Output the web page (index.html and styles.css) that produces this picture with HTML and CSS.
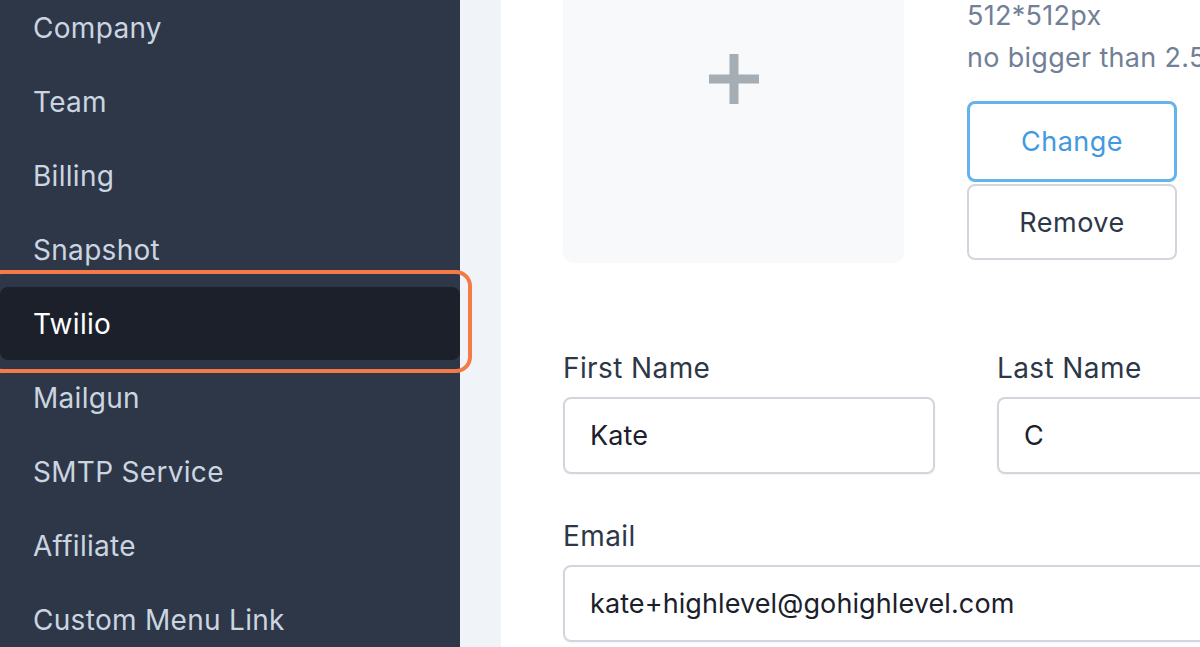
FILE: index.html
```html
<!DOCTYPE html>
<html>
<head>
<meta charset="utf-8">
<link rel="stylesheet" href="styles.css">
</head>
<body>
<div class="app">
  <nav class="sidebar">
    <ul class="menu">
      <li class="item">Company</li>
      <li class="item">Team</li>
      <li class="item">Billing</li>
      <li class="item">Snapshot</li>
      <li class="item active"><span class="highlight"></span>Twilio</li>
      <li class="item">Mailgun</li>
      <li class="item">SMTP Service</li>
      <li class="item">Affiliate</li>
      <li class="item">Custom Menu Link</li>
    </ul>
  </nav>
  <div class="gutter"></div>
  <main class="main">
    <section class="logo-row">
      <div class="logo-drop">
        <svg class="plus" width="50" height="50" viewBox="0 0 50 50"><path d="M25 0V50M0 25H50" stroke="#a6aeb5" stroke-width="9"/></svg>
      </div>
      <div class="logo-side">
        <p class="hint">512*512px</p>
        <p class="hint">no bigger than 2.5 MB</p>
        <div class="buttons">
          <button class="btn btn-change">Change</button>
          <button class="btn btn-remove">Remove</button>
        </div>
      </div>
    </section>
    <section class="form">
      <div class="row">
        <div class="field first">
          <label class="label">First Name</label>
          <div class="input">Kate</div>
        </div>
        <div class="field last">
          <label class="label">Last Name</label>
          <div class="input">C</div>
        </div>
      </div>
      <div class="field email">
        <label class="label">Email</label>
        <div class="input">kate+highlevel@gohighlevel.com</div>
      </div>
    </section>
  </main>
</div>
</body>
</html>
```
FILE: styles.css
```css
* { box-sizing: border-box; }
html, body { margin: 0; padding: 0; }
body {
  width: 1200px;
  height: 647px;
  overflow: hidden;
  font-family: Inter, "Noto Sans", "Liberation Sans", sans-serif;
  background: #ffffff;
}
.app {
  display: flex;
  height: 647px;
}
.sidebar {
  width: 460px;
  flex: none;
  background: #2d3748;
  position: relative;
  z-index: 1;
}
.menu {
  list-style: none;
  margin: -9px 0 0;
  padding: 0;
}
.item {
  position: relative;
  height: 74px;
  display: flex;
  align-items: center;
  padding-left: 33px;
  font-size: 28px;
  color: #cbd5e0;
  letter-spacing: 0.3px;
}
.item.active {
  background: #1c202b;
  color: #ffffff;
  border-radius: 8px;
  height: 73px;
  margin-bottom: 1px;
}
.highlight {
  position: absolute;
  left: -14px;
  right: -12px;
  top: -17px;
  bottom: -13px;
  border: 4px solid #f47a46;
  border-radius: 16px;
  pointer-events: none;
}
.gutter {
  width: 41px;
  flex: none;
  background: #f0f4f8;
}
.main {
  flex: 1;
  padding-left: 62px;
  min-width: 0;
  overflow: hidden;
}
.logo-row {
  display: flex;
  gap: 63px;
  align-items: flex-start;
}
.logo-drop {
  width: 341px;
  height: 290px;
  margin-top: -27px;
  flex: none;
  background: #f7f9fa;
  border-radius: 10px;
  display: flex;
  justify-content: center;
  padding-top: 81px;
}
.plus { display: block; }
.logo-side {
  white-space: nowrap;
}
.hint {
  margin: 0;
  font-size: 27px;
  line-height: 42px;
  color: #718096;
  letter-spacing: 0.3px;
}
.hint:first-child { margin-top: -5px; }
.buttons {
  display: flex;
  flex-direction: column;
  gap: 2px;
  margin-top: 22px;
  width: 210px;
}
.btn {
  font-family: inherit;
  font-size: 27px;
  letter-spacing: 0.5px;
  background: #ffffff;
  border-radius: 8px;
  width: 210px;
}
.btn-change {
  height: 81px;
  border: 3px solid #63b3ed;
  color: #4299e1;
}
.btn-remove {
  height: 76px;
  border: 2px solid #d2d6dc;
  color: #2d3748;
}
.form {
  margin-top: 88px;
}
.row {
  display: flex;
  gap: 62px;
}
.field {
  display: flex;
  flex-direction: column;
}
.field.first { width: 372px; flex: none; }
.field.last { width: 400px; flex: none; }
.label {
  font-size: 28px;
  line-height: 34px;
  color: #2d3748;
  margin-bottom: 12px;
  letter-spacing: 0.4px;
}
.input {
  height: 77px;
  border: 2px solid #d2d6dc;
  border-radius: 8px;
  padding-left: 25px;
  display: flex;
  align-items: center;
  font-size: 27px;
  color: #1a202c;
  letter-spacing: 0.1px;
  box-shadow: 0 1px 2px rgba(0,0,0,0.05);
}
.field.last .input { border-right: none; border-radius: 8px 0 0 8px; }
.email {
  margin-top: 45px;
  width: 720px;
}
```
